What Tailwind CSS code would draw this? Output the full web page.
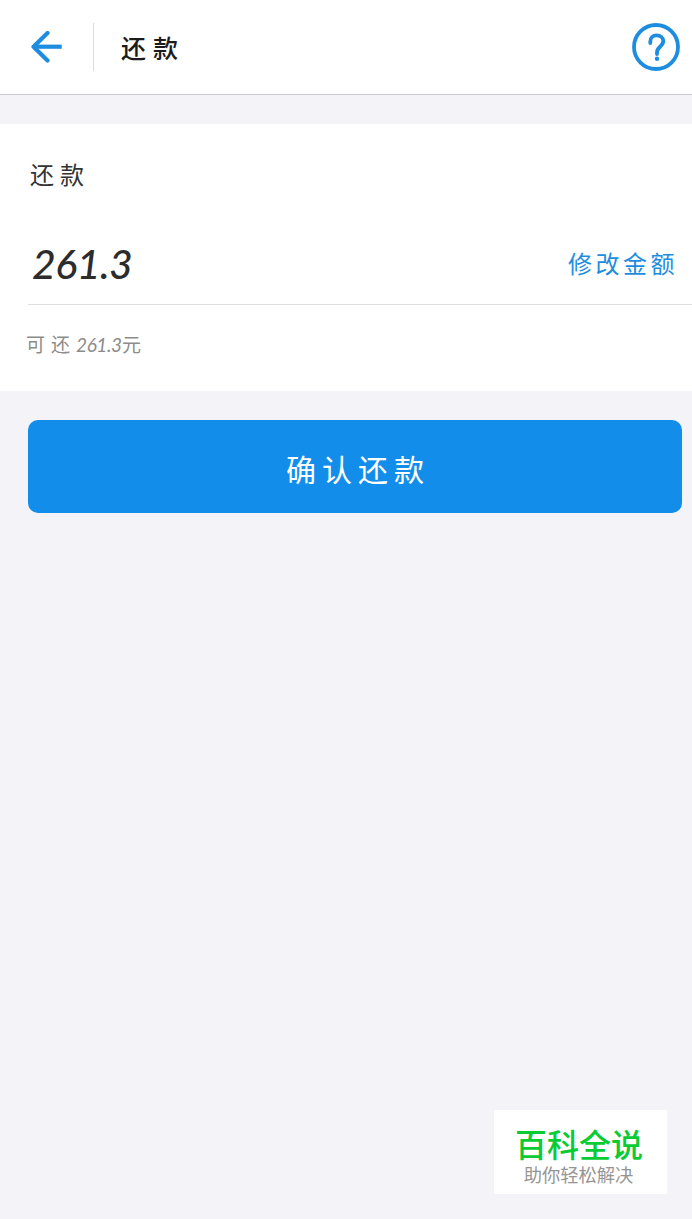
<!DOCTYPE html>
<html lang="zh-CN">
<head>
  <meta charset="UTF-8" />
  <meta name="viewport" content="width=device-width, initial-scale=1.0" />
  <title>还款</title>
  <script src="https://cdn.jsdelivr.net/npm/@tailwindcss/browser@4"></script>
</head>
<body class="bg-[#f3f3f8] min-h-screen flex flex-col font-['Lato','Noto_Sans_CJK_SC',sans-serif]">

  <!-- Header -->
  <header class="h-[95px] shrink-0 bg-white border-b border-[#c9c9cb] flex items-center pl-[30px] pr-3">
    <button class="w-8 h-8" aria-label="返回">
      <svg class="w-8 h-8" viewBox="0 0 32 32" fill="none" stroke="#1e8de0" stroke-width="4.2" stroke-linejoin="round">
        <path d="M17.500 2L3.500 15.700L17.500 29.500" stroke-linecap="round" />
        <path d="M3.500 15.700H31.700" />
      </svg>
    </button>
    <div class="w-px h-12 bg-[#dadadc] ml-[31px]"></div>
    <h1 class="ml-[27px] pt-0.5 text-[25px] leading-none tracking-[7px] font-medium text-[#1c1c1c]">还款</h1>
    <button class="ml-auto mb-px w-12 h-12" aria-label="帮助">
      <svg class="w-12 h-12" viewBox="0 0 48 48" fill="none" stroke="#1e8de0">
        <circle cx="24" cy="24" r="22" stroke-width="3.800" />
        <path d="M18.300 20V18.500C18.300 14.800 20.900 12.300 24.500 12.300C28.300 12.300 31.300 14.600 31.300 18C31.300 20.700 29.500 22.500 27.800 24C25.800 25.800 25 27 25 29.500V31" stroke-width="3.800" stroke-linecap="round" />
        <circle cx="25" cy="35.700" r="2.200" fill="#1e8de0" stroke="none" />
      </svg>
    </button>
  </header>

  <!-- Amount -->
  <section class="mt-[29px] h-[267px] shrink-0 bg-white">
    <h2 class="pt-[38px] pl-[30px] text-[24px] leading-[25px] tracking-[6px] text-[#333]">还款</h2>
    <div class="ml-7 mt-[38px] h-20 border-b border-[#dedee0] flex items-center justify-between pr-[14px] pb-0.5">
      <span class="pl-[4px] text-[41px] leading-none italic tracking-[-0.500px] font-medium text-[#2c2c2c]">261.3</span>
      <a href="#" class="text-[24px] leading-none tracking-[3.500px] text-[#1e8de0]">修改金额</a>
    </div>
    <p class="mt-[29px] pl-[26px] text-[19px] leading-[22px] text-[#8c8c8c] flex">
      <span class="tracking-[6px]">可还</span><span class="italic tracking-[-0.400px] w-[46px]">261.3</span><span>元</span>
    </p>
  </section>

  <button class="mt-[29px] ml-7 mr-[10px] h-[93px] shrink-0 rounded-[10px] bg-[#128eea] text-white text-[30px] leading-none tracking-[6px] pl-[6px] pt-[5px]">确认还款</button>

  <!-- Site badge -->
  <footer class="mt-auto mb-[25px] mr-[25px] self-end w-[173px] h-[84px] bg-white flex flex-col items-center pt-[16px] pr-[3px] font-['Noto_Sans_CJK_SC',sans-serif]">
    <strong class="text-[32px] leading-[34px] font-medium text-[#09cb34]">百科全说</strong>
    <span class="mt-1 pr-px text-[18.300px] leading-5 text-[#959595]">助你轻松解决</span>
  </footer>

</body>
</html>
